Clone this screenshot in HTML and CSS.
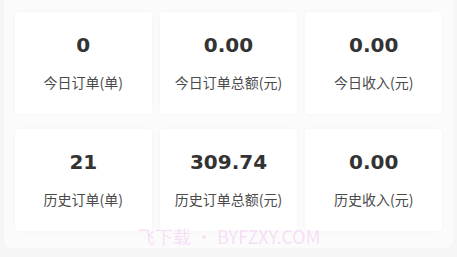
FILE: index.html
```html
<!DOCTYPE html>
<html lang="zh-CN">
<head>
<meta charset="utf-8">
<link rel="stylesheet" href="styles.css">
</head>
<body>
<div class="panel">
  <div class="grid">
    <div class="card"><div class="num">0</div><div class="label">今日订单(单)</div></div>
    <div class="card"><div class="num">0.00</div><div class="label">今日订单总额(元)</div></div>
    <div class="card"><div class="num">0.00</div><div class="label">今日收入(元)</div></div>
    <div class="card"><div class="num">21</div><div class="label">历史订单(单)</div></div>
    <div class="card"><div class="num">309.74</div><div class="label">历史订单总额(元)</div></div>
    <div class="card"><div class="num">0.00</div><div class="label">历史收入(元)</div></div>
  </div>
  <div class="watermark">飞下载 • BYFZXY.COM</div>
</div>
</body>
</html>
```

FILE: styles.css
```css
html, body {
  margin: 0;
  padding: 0;
}
body {
  width: 457px;
  height: 257px;
  background: #f6f6f6;
  font-family: "Liberation Sans", "Noto Sans CJK SC", sans-serif;
  overflow: hidden;
}
.panel {
  position: relative;
  margin: 0 4px;
  height: 248px;
  box-sizing: border-box;
  padding: 12px 11px 0 11px;
  background: #fbfbfb;
  border-radius: 0 0 8px 8px;
}
.grid {
  display: grid;
  grid-template-columns: repeat(3, 1fr);
  column-gap: 8.5px;
  row-gap: 15px;
}
.card {
  height: 102px;
  box-sizing: border-box;
  padding-top: 21px;
  background: #ffffff;
  border-radius: 4px;
  box-shadow: 0 0 4px rgba(0, 0, 0, 0.03);
  display: flex;
  flex-direction: column;
  align-items: center;
  gap: 15px;
}
.num {
  font-family: "DejaVu Sans", sans-serif;
  font-size: 20px;
  line-height: 24px;
  font-weight: bold;
  color: #333333;
}
.label {
  font-family: "Noto Sans CJK SC", sans-serif;
  font-size: 14px;
  line-height: 20px;
  color: #4a4a4a;
}
.watermark {
  position: absolute;
  left: 133px;
  top: 225px;
  font-family: "Noto Sans CJK SC", sans-serif;
  font-size: 18px;
  line-height: 22px;
  color: rgba(240, 160, 240, 0.33);
  white-space: nowrap;
}
```
